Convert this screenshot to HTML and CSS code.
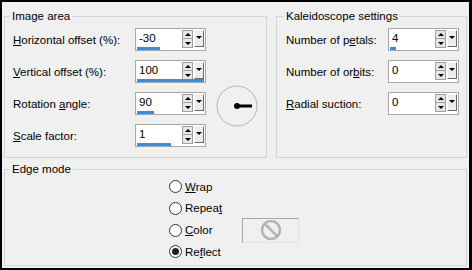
FILE: index.html
```html
<!DOCTYPE html>
<html lang="en">
  <head>
    <meta charset="utf-8" />
    <title>Kaleidoscope</title>
    <link rel="stylesheet" href="styles.css">
  </head>
  <body>
    <div class="window">
      <div class="top">
        <fieldset class="group image-area">
          <legend>Image area</legend>
          <div class="fields">
            <label class="field-label"><u>H</u>orizontal offset (%):</label>
            <div class="spin">
              <div class="spin-main"><span class="spin-value">-30</span><span class="updown"><span class="btn up"></span><span class="btn down"></span></span><span class="drop"></span></div>
              <div class="spin-bar"><div class="spin-fill" style="width: 35%"></div></div>
            </div>

            <label class="field-label"><u>V</u>ertical offset (%):</label>
            <div class="spin">
              <div class="spin-main"><span class="spin-value">100</span><span class="updown"><span class="btn up"></span><span class="btn down"></span></span><span class="drop"></span></div>
              <div class="spin-bar"><div class="spin-fill" style="width: 100%"></div></div>
            </div>

            <label class="field-label">Rotation <u>a</u>ngle:</label>
            <div class="spin">
              <div class="spin-main"><span class="spin-value">90</span><span class="updown"><span class="btn up"></span><span class="btn down"></span></span><span class="drop"></span></div>
              <div class="spin-bar"><div class="spin-fill" style="width: 25%"></div></div>
            </div>

            <label class="field-label"><u>S</u>cale factor:</label>
            <div class="spin">
              <div class="spin-main"><span class="spin-value">1</span><span class="updown"><span class="btn up"></span><span class="btn down"></span></span><span class="drop"></span></div>
              <div class="spin-bar"><div class="spin-fill" style="width: 51%"></div></div>
            </div>

            <svg class="dial" width="42" height="42" viewBox="0 0 42 42">
              <circle cx="21" cy="21" r="20" fill="none" stroke="#b4b4b4" stroke-width="1" />
              <line x1="21" y1="21" x2="36" y2="21" stroke="#000" stroke-width="3" />
              <circle cx="21" cy="21" r="3" fill="#000" />
            </svg>
          </div>
        </fieldset>

        <fieldset class="group kaleido">
          <legend>Kaleidoscope settings</legend>
          <div class="fields">
            <label class="field-label">Number of p<u>e</u>tals:</label>
            <div class="spin">
              <div class="spin-main"><span class="spin-value">4</span><span class="updown"><span class="btn up"></span><span class="btn down"></span></span><span class="drop"></span></div>
              <div class="spin-bar"><div class="spin-fill" style="width: 9%"></div></div>
            </div>

            <label class="field-label">Number of or<u>b</u>its:</label>
            <div class="spin">
              <div class="spin-main"><span class="spin-value">0</span><span class="updown"><span class="btn up"></span><span class="btn down"></span></span><span class="drop"></span></div>
              <div class="spin-bar"><div class="spin-fill" style="width: 0%"></div></div>
            </div>

            <label class="field-label"><u>R</u>adial suction:</label>
            <div class="spin">
              <div class="spin-main"><span class="spin-value">0</span><span class="updown"><span class="btn up"></span><span class="btn down"></span></span><span class="drop"></span></div>
              <div class="spin-bar"><div class="spin-fill" style="width: 0%"></div></div>
            </div>
          </div>
        </fieldset>
      </div>

      <fieldset class="group edge">
        <legend>Edge mode</legend>
        <div class="radios">
          <div class="radio"><span class="radio-mark"></span><span><u>W</u>rap</span></div>
          <div class="radio"><span class="radio-mark"></span><span>Repea<u>t</u></span></div>
          <div class="radio"><span class="radio-mark"></span><span><u>C</u>olor</span></div>
          <div class="radio"><span class="radio-mark on"></span><span>Re<u>f</u>lect</span></div>
          <div class="swatch">
            <svg width="24" height="24" viewBox="0 0 24 24">
              <circle cx="12" cy="12" r="9" fill="none" stroke="#b4b4b4" stroke-width="2.6" />
              <line x1="5.8" y1="5.8" x2="18.2" y2="18.2" stroke="#b4b4b4" stroke-width="2.6" />
            </svg>
          </div>
        </div>
      </fieldset>
    </div>
  </body>
</html>
```

FILE: styles.css
```css
* {
  box-sizing: border-box;
}
body {
  margin: 0;
  font-family: "Liberation Sans", Arial, sans-serif;
  font-size: 11.5px;
  color: #000;
}
.window {
  width: 472px;
  height: 270px;
  border: solid #000;
  border-width: 2px 3px 2px 2px;
  background: #f0f0f0;
  padding: 6px 2px 2px;
  display: flex;
  flex-direction: column;
  gap: 3px;
}
.top {
  display: flex;
  gap: 9px;
  height: 150px;
}
.group {
  margin: 0;
  padding: 4px 0 0;
  border: 1px solid #d5d5d5;
  min-width: 0;
}
.group legend {
  padding: 0 2px;
  margin-left: 5px;
  line-height: 16px;
}
.image-area {
  width: 263px;
}
.kaleido {
  flex: 1;
}
.kaleido legend {
  margin-left: 7px;
}
.edge {
  flex: 1;
}

/* label / spin box grid */
.fields {
  display: grid;
  grid-template-columns: 122px 71px auto;
  grid-auto-rows: 23px;
  row-gap: 9px;
  padding-left: 8px;
  align-items: center;
}
.kaleido .fields {
  grid-template-columns: 102px 71px;
  padding-left: 9px;
}
.field-label {
  grid-column: 1;
  white-space: nowrap;
}
.dial {
  grid-column: 3;
  grid-row: 2 / 5;
  align-self: center;
  margin: 5px 0 0 10px;
}

/* spin box */
.spin {
  grid-column: 2;
  height: 23px;
  border: 1px solid #a8a8a8;
  background: #fff;
  padding: 0 1px;
  display: flex;
  flex-direction: column;
}
.spin-main {
  height: 18px;
  display: flex;
  align-items: flex-start;
}
.spin-value {
  flex: 1;
  padding-left: 2px;
  line-height: 18px;
}
.updown {
  width: 11px;
  margin-top: 1px;
  display: flex;
  flex-direction: column;
  border: 1px solid #a0a0a0;
}
.btn {
  height: 8px;
  background: #e6e6e6;
  display: flex;
  align-items: center;
  justify-content: center;
}
.btn.up {
  border-bottom: 1px solid #a0a0a0;
}
.btn.up::after {
  content: "";
  border-left: 3px solid transparent;
  border-right: 3px solid transparent;
  border-bottom: 3px solid #000;
}
.btn.down::after {
  content: "";
  border-left: 3px solid transparent;
  border-right: 3px solid transparent;
  border-top: 3px solid #000;
}
.drop {
  width: 10px;
  height: 17px;
  margin: 1px 0 0 1px;
  border: 1px solid;
  border-color: #fff #6a6a6a #6a6a6a #fff;
  background: #ececec;
  display: flex;
  justify-content: center;
  padding-top: 5px;
}
.drop::after {
  content: "";
  height: 0;
  border-left: 3px solid transparent;
  border-right: 3px solid transparent;
  border-top: 3px solid #000;
}
.spin-bar {
  height: 3px;
}
.spin-fill {
  height: 100%;
  background: #3390e6;
}

/* edge mode radios */
.radios {
  display: grid;
  grid-template-columns: 73px 57px;
  grid-auto-rows: 21.67px;
  padding-left: 164px;
  margin-top: -5px;
  align-items: center;
}
.radio {
  grid-column: 1;
  display: flex;
  align-items: center;
  gap: 3px;
}
.radio-mark {
  width: 13px;
  height: 13px;
  border: 1px solid #333;
  border-radius: 50%;
  background: #fff;
  display: flex;
  align-items: center;
  justify-content: center;
}
.radio-mark.on::after {
  content: "";
  width: 7px;
  height: 7px;
  border-radius: 50%;
  background: #222;
}
.swatch {
  grid-column: 2;
  grid-row: 3;
  height: 25px;
  border: 1px solid;
  border-color: #a8a8a8 #e2e2e2 #e2e2e2 #a8a8a8;
  display: flex;
  align-items: center;
  justify-content: center;
}
```
